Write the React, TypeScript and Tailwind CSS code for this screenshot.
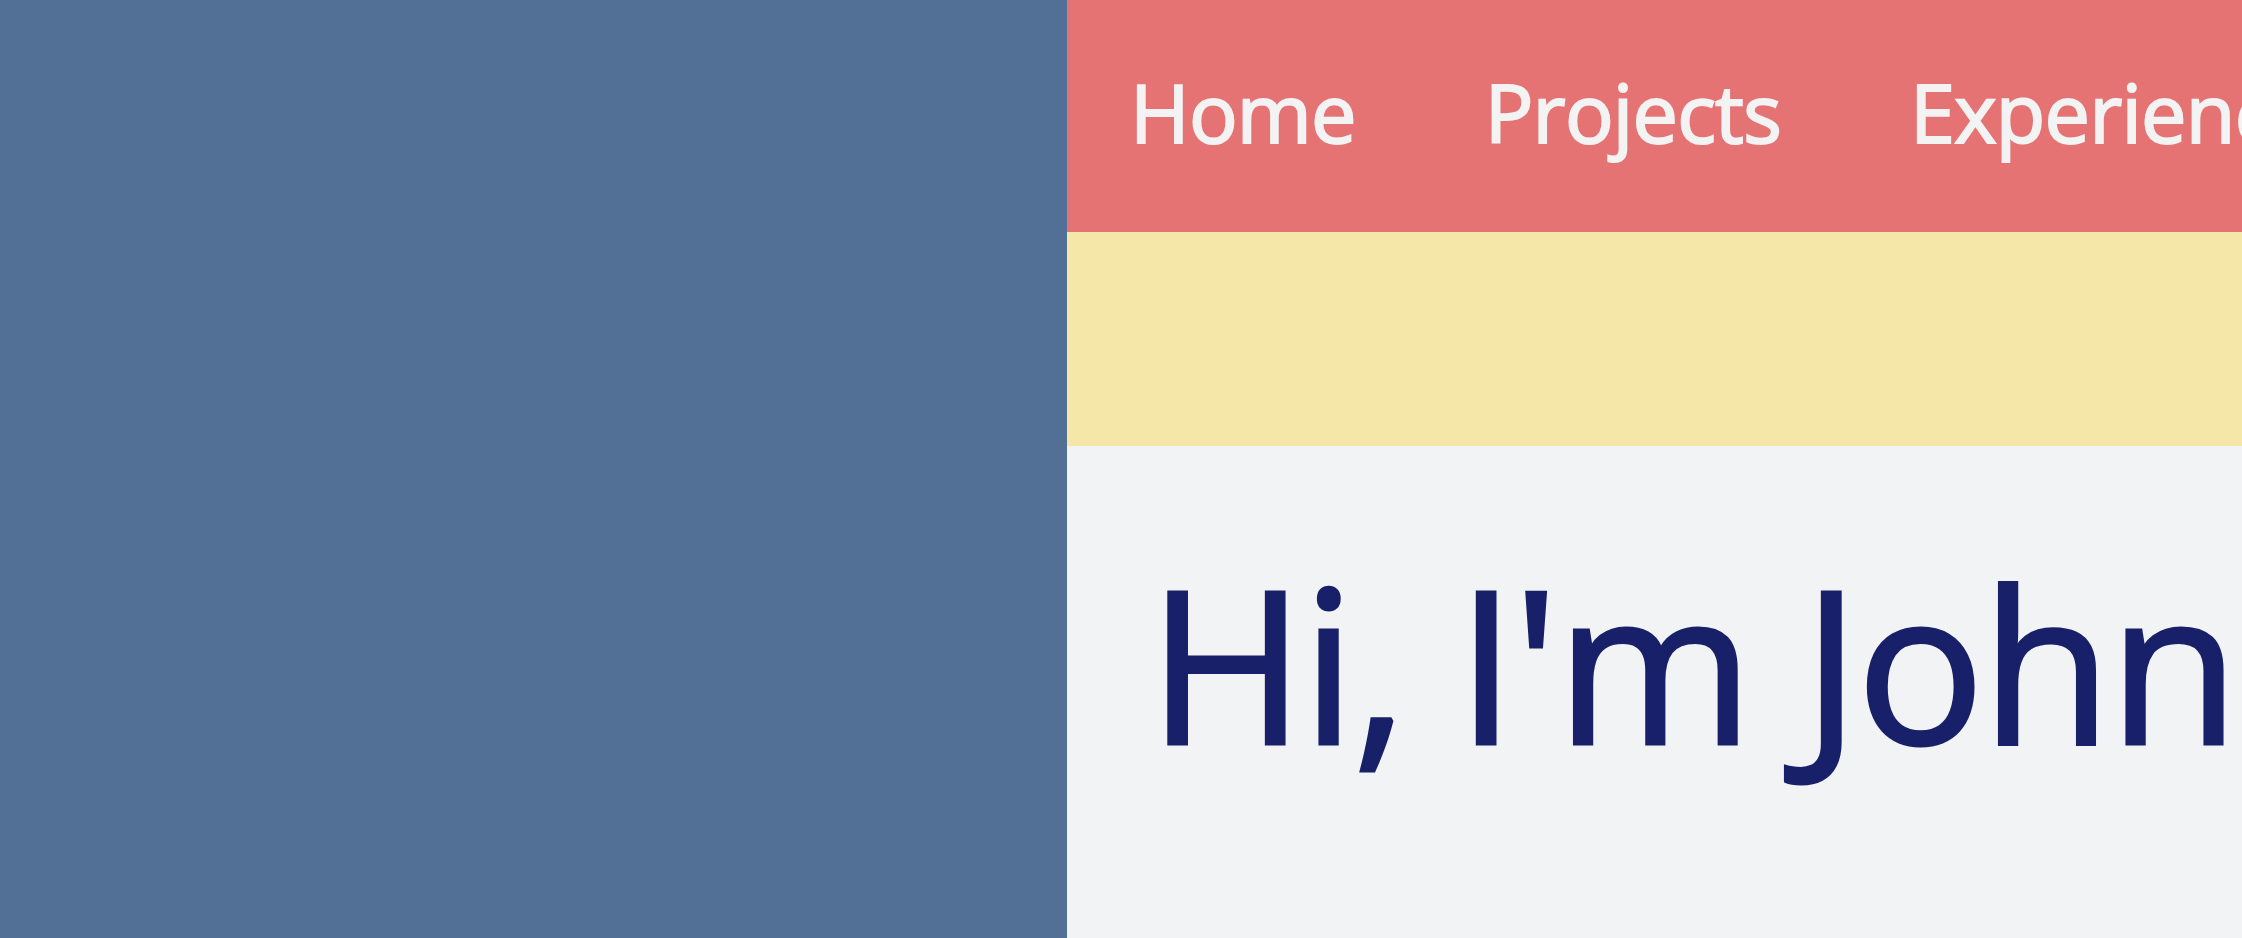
const navItems = ["Home", "Projects", "Experience", "Contact"];

export default function App() {
  return (
    <div className="flex h-screen w-full overflow-hidden bg-[#f2f3f4] font-['Open_Sans',sans-serif]">
      {/* sidebar */}
      <aside className="h-full w-[1067px] shrink-0 bg-[#526f96]" />

      {/* main column */}
      <main className="flex min-w-0 flex-1 flex-col">
        <nav className="flex h-[232px] shrink-0 items-start gap-[129px] overflow-hidden whitespace-nowrap bg-[#e57373] pl-[63px] pt-[71px]">
          {navItems.map((item) => (
            <a
              key={item}
              className="block text-[81px] leading-none tracking-[-0.01em] text-[#f3f3f3] [-webkit-text-stroke:2px_#f3f3f3]"
            >
              {item}
            </a>
          ))}
        </nav>

        <div className="h-[214px] shrink-0 bg-[#f5e7a8]" />

        <section className="whitespace-nowrap pl-[81px] pt-[109px]">
          <h1 className="text-[213px] leading-none tracking-[-0.015em] text-[#172068] [-webkit-text-stroke:3px_#172068]">
            Hi, I'm John
          </h1>
        </section>
      </main>
    </div>
  );
}
